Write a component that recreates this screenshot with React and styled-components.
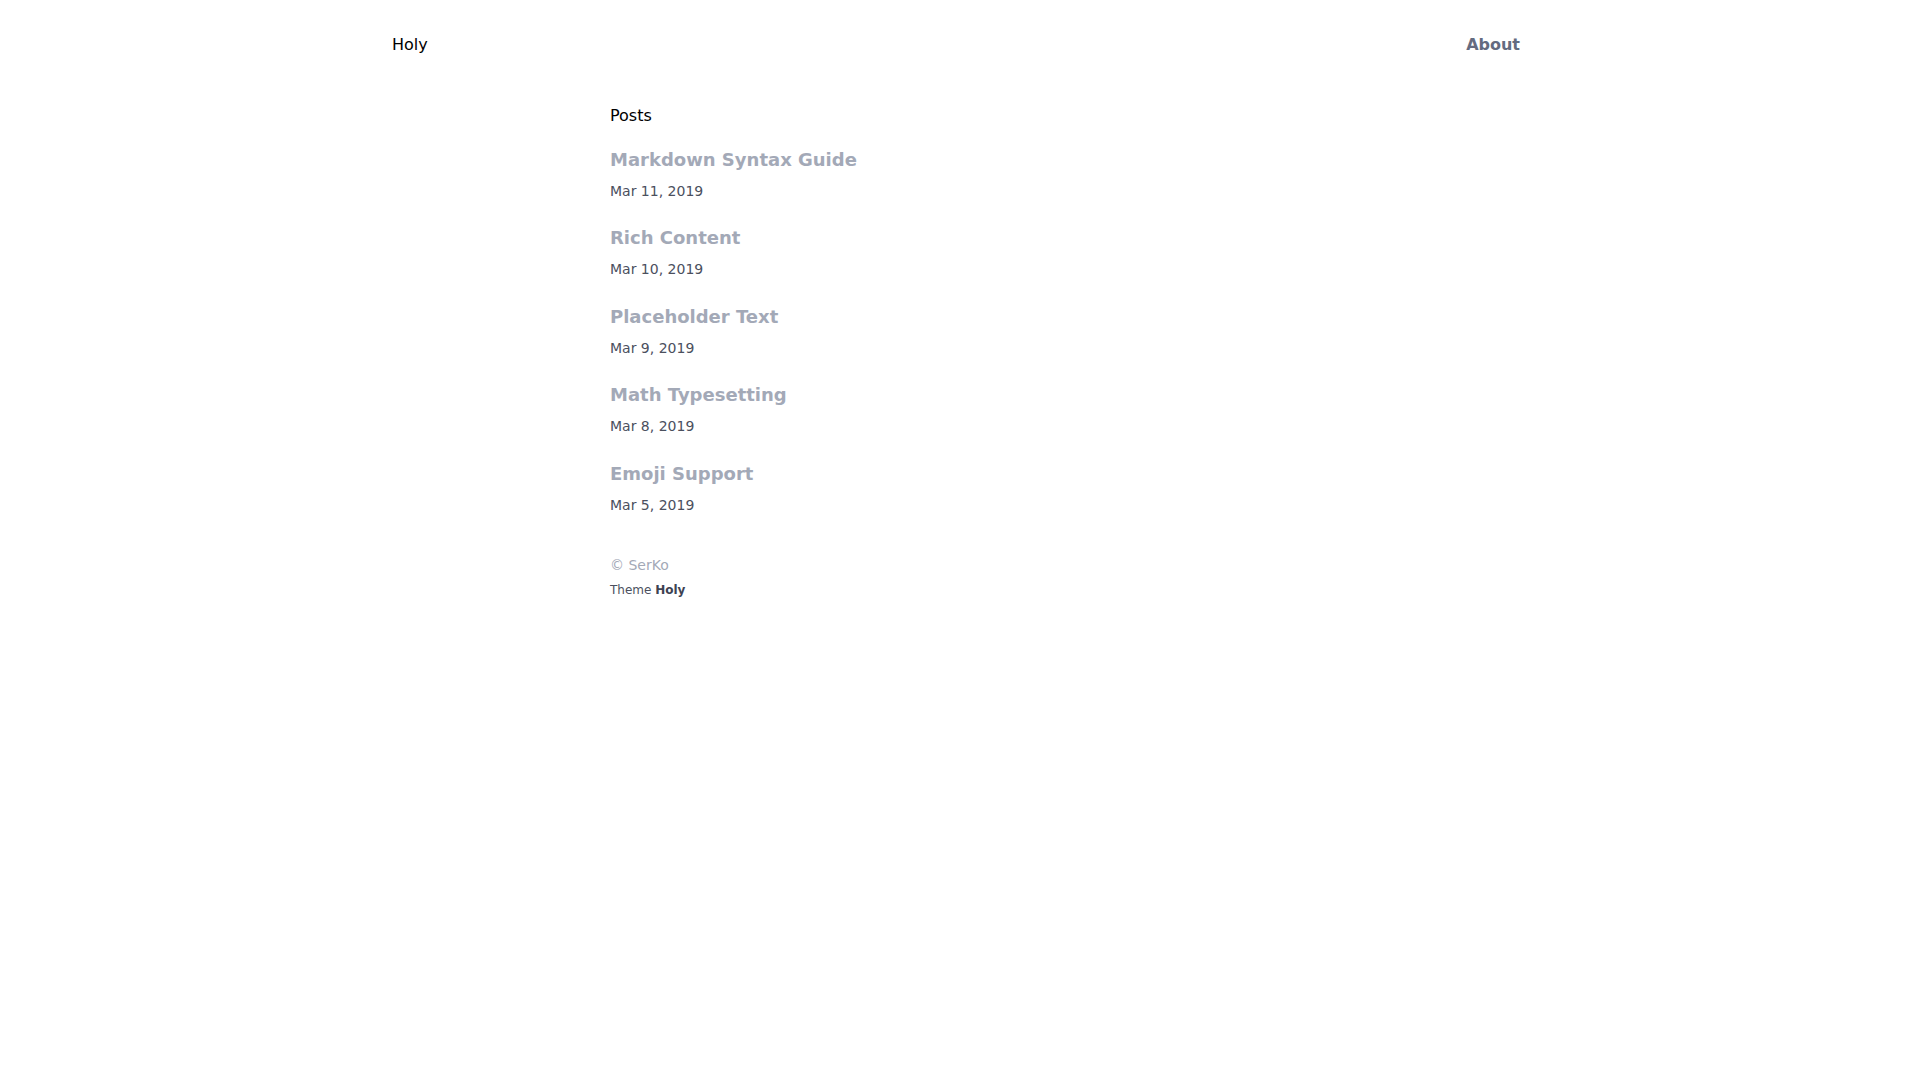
import React from 'react';
import styled, { createGlobalStyle } from 'styled-components';

const GlobalStyle = createGlobalStyle`
  *, *::before, *::after { box-sizing: border-box; }
  html, body {
    margin: 0;
    padding: 0;
    background: #fff;
    font-family: "DejaVu Sans", Verdana, sans-serif;
    font-size: 16px;
    line-height: 1.5;
    color: #000;
  }
  a { text-decoration: none; }
`;

const posts = [
  { title: 'Markdown Syntax Guide', date: 'Mar 11, 2019' },
  { title: 'Rich Content', date: 'Mar 10, 2019' },
  { title: 'Placeholder Text', date: 'Mar 9, 2019' },
  { title: 'Math Typesetting', date: 'Mar 8, 2019' },
  { title: 'Emoji Support', date: 'Mar 5, 2019' },
];

const App = () => (
  <>
    <GlobalStyle />
    <Header>
      <Brand href="#">Holy</Brand>
      <Nav>
        <NavLink href="#">About</NavLink>
      </Nav>
    </Header>
    <Main>
      <SectionTitle>Posts</SectionTitle>
      <PostList>
        {posts.map((p) => (
          <Post key={p.title}>
            <PostTitle href="#">{p.title}</PostTitle>
            <PostDate>{p.date}</PostDate>
          </Post>
        ))}
      </PostList>
      <Footer>
        <Copy>© SerKo</Copy>
        <Credit>Theme <b>Holy</b></Credit>
      </Footer>
    </Main>
  </>
);

const Header = styled.header`
  display: flex;
  align-items: center;
  justify-content: space-between;
  max-width: 1152px;
  margin: 0 auto;
  padding: 33px 8px 0;
`;

const Brand = styled.a`
  color: #000;
  font-size: 16px;
`;

const Nav = styled.nav`
  display: flex;
`;

const NavLink = styled.a`
  padding: 0 8px;
  color: #646b80;
  font-weight: bold;
  font-size: 16px;
`;

const Main = styled.main`
  max-width: 700px;
  margin: 0 auto;
  padding-top: 47px;
`;

const SectionTitle = styled.h1`
  margin: 0;
  font-size: 16px;
  font-weight: normal;
`;

const PostList = styled.div`
  display: flex;
  flex-direction: column;
  gap: 22.5px;
  margin-top: 17.5px;
`;

const Post = styled.article`
  display: flex;
  flex-direction: column;
  gap: 8px;
`;

const PostTitle = styled.a`
  color: #a3a9b7;
  font-size: 18px;
  font-weight: bold;
  line-height: 27px;
`;

const PostDate = styled.div`
  color: #4b505e;
  font-size: 14px;
  line-height: 21px;
`;

const Footer = styled.footer`
  margin-top: 39px;
`;

const Copy = styled.div`
  color: #a3a9b7;
  font-size: 14px;
  line-height: 21px;
`;

const Credit = styled.div`
  margin-top: 5px;
  color: #4b505e;
  font-size: 12px;
  line-height: 18px;
  b { color: #3d4252; }
`;

export default App;
